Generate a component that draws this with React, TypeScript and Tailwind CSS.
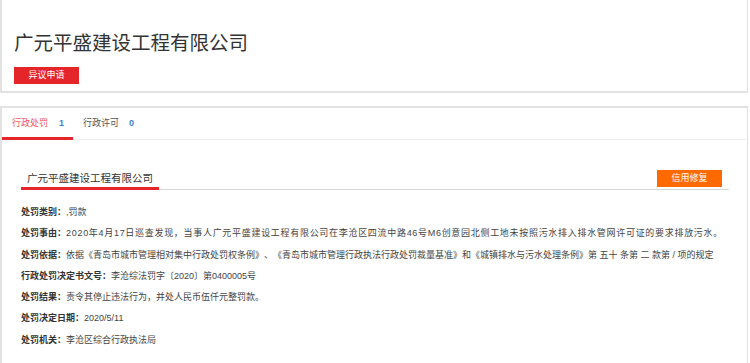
const rows: [string, string, string?][] = [
  ["处罚类别：", ",罚款"],
  [
    "处罚事由：",
    "2020年4月17日巡查发现，当事人广元平盛建设工程有限公司在李沧区四流中路46号M6创意园北侧工地未按照污水排入排水管网许可证的要求排放污水。",
    "tracking-[0.7px]",
  ],
  [
    "处罚依据：",
    "依据《青岛市城市管理相对集中行政处罚权条例》、《青岛市城市管理行政执法行政处罚裁量基准》和《城镇排水与污水处理条例》第 五十 条第 二 款第 / 项的规定",
  ],
  ["行政处罚决定书文号：", "李沧综法罚字〔2020〕第0400005号"],
  ["处罚结果：", "责令其停止违法行为，并处人民币伍仟元整罚款。"],
  ["处罚决定日期：", "2020/5/11"],
  ["处罚机关：", "李沧区综合行政执法局"],
];

export default function App() {
  return (
    <div
      className="w-[750px] h-[363px] overflow-hidden bg-white text-[#333] [text-spacing-trim:space-all]"
      style={{ fontFamily: '"Liberation Sans", "Noto Sans CJK SC", sans-serif' }}
    >
      {/* header card */}
      <div className="w-[748px] h-[93px] border-l-2 border-r border-b-2 border-[#e2e2e2] pl-[12px] pt-[31px]">
        <h1 className="text-[19.5px] leading-[24px] text-[#333] font-normal">广元平盛建设工程有限公司</h1>
        <button className="mt-[12px] w-[65px] h-[17px] bg-[#e4262b] text-white text-[9px] leading-[17px]">
          异议申请
        </button>
      </div>

      {/* detail card */}
      <div className="mt-[13px] w-[748px] h-[260px] border-l-2 border-r border-t-2 border-[#e2e2e2]">
        <div className="flex h-[32px] border-b border-[#eeeeee] text-[9px] whitespace-nowrap">
          <div className="flex items-center pl-[10px] pr-[9px] pt-[2px] border-b-[3px] border-[#e4262b] -mb-[1px]">
            <span className="text-[#f0595c]">行政处罚</span>
            <span className="ml-[11px] w-[5px] text-[#3d7fd9] font-bold">1</span>
          </div>
          <div className="flex items-center pl-[10px]">
            <span className="text-[#555]">行政许可</span>
            <span className="ml-[10px] text-[#3d7fd9] font-bold">0</span>
          </div>
        </div>

        <div className="ml-[19px] mr-[18px] mt-[30px] flex items-end justify-between border-b border-[#d6d6d6]">
          <div className="px-[6px] border-b-[3px] border-[#e4262b] -mb-[1px] text-[10.5px] leading-[16px] pb-[1px]">
            广元平盛建设工程有限公司
          </div>
          <button className="mr-[7px] mb-[2px] w-[65px] h-[17px] bg-[#ff6a00] text-white text-[9px] leading-[17px]">
            信用修复
          </button>
        </div>

        <div className="mt-[12px] pl-[19px] flex flex-col text-[9px]">
          {rows.map(([k, v, extra]) => (
            <div key={k} className="h-[21.3px] leading-[21.3px] whitespace-nowrap">
              <span className="font-bold text-[#333]">{k}</span>
              <span className={`text-[#444] ${extra ?? ""}`}>{v}</span>
            </div>
          ))}
        </div>
      </div>
    </div>
  );
}
